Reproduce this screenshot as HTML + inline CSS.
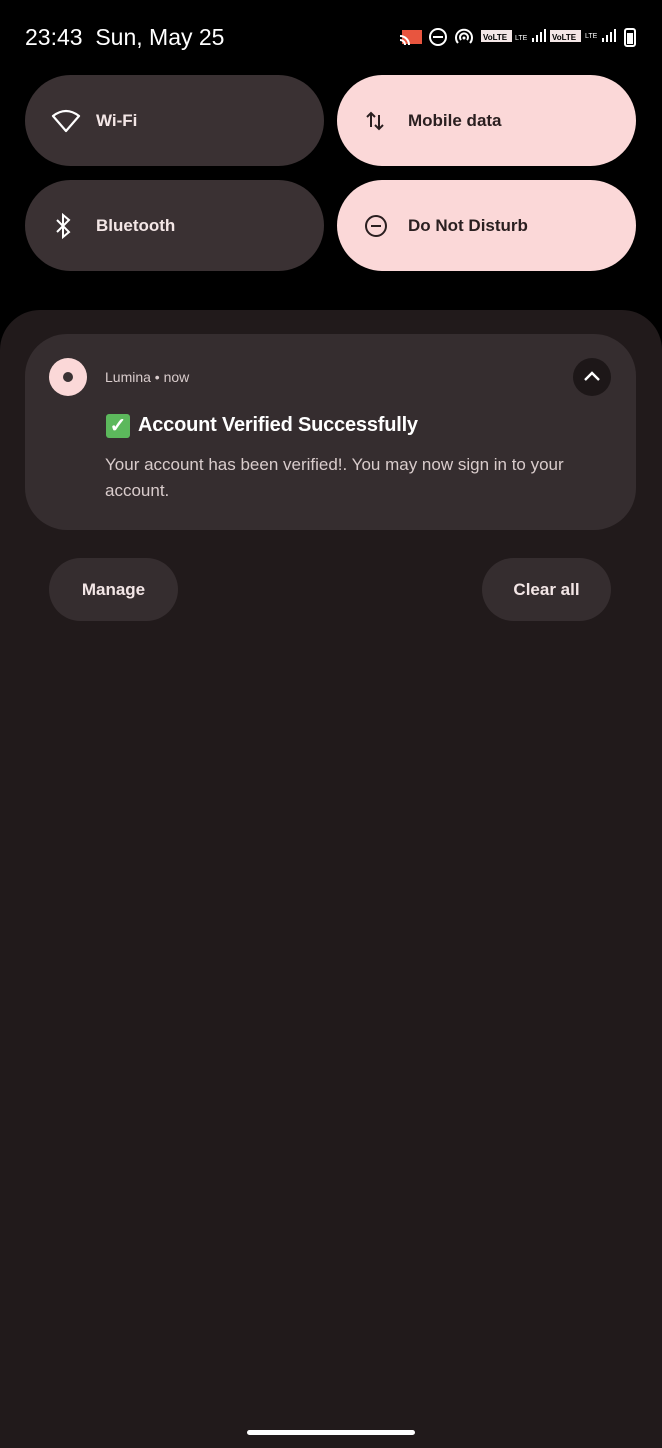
<!DOCTYPE html>
<html style="margin:0;width:662px;height:1448px;overflow:hidden;"><head><style>
body{margin:0;width:662px;height:1448px;background:#000;position:relative;overflow:hidden;font-family:"Liberation Sans",sans-serif;}
.abs{position:absolute;}
.tile{position:absolute;width:299px;height:91px;border-radius:46px;display:flex;align-items:center;font-size:17px;font-weight:bold;}
.dark{background:#3a3133;color:#f3e6e6;}
.pink{background:#fbd8d8;color:#2a1f20;}
.tile svg{position:absolute;left:26px;}
.tile span{position:absolute;left:71px;}
.btn{position:absolute;top:558px;height:63px;border-radius:32px;background:#352d2f;color:#f3e6e6;font-size:17px;font-weight:bold;display:flex;align-items:center;justify-content:center;}
</style></head><body>
<div class="abs" style="left:25px;top:24px;color:#fff;font-size:23px;">23:43&nbsp;&nbsp;Sun, May 25</div>
<svg class="abs" style="left:398px;top:26px" width="245" height="22" viewBox="0 0 245 22">
<rect x="4" y="4" width="20" height="14" fill="#e8553f"/><path d="M2 10a9 9 0 0 1 9 9M2 14a5 5 0 0 1 5 5" stroke="#fff" stroke-width="2" fill="none"/>
<circle cx="40" cy="11" r="8" stroke="#fff" stroke-width="2" fill="none"/><rect x="35" y="10" width="10" height="2" fill="#fff"/>
<path d="M60 17a8 8 0 1 1 12 0M63 14a4 4 0 1 1 6 0" stroke="#fff" stroke-width="2" fill="none"/><circle cx="66" cy="12" r="1.5" fill="#fff"/>
<rect x="83" y="4" width="31" height="12" fill="#f3e6e6"/><text x="85" y="14" font-size="8" font-weight="bold" fill="#000">VoLTE</text>
<text x="117" y="14" font-size="7" fill="#fff">LTE</text>
<path d="M134 16v-4h2v4zM138 16v-7h2v7zM142 16v-10h2v10zM146 16v-13h2v13z" fill="#fff"/>
<rect x="152" y="4" width="31" height="12" fill="#f3e6e6"/><text x="154" y="14" font-size="8" font-weight="bold" fill="#000">VoLTE</text>
<text x="187" y="12" font-size="7" fill="#fff">LTE</text>
<path d="M204 16v-4h2v4zM208 16v-7h2v7zM212 16v-10h2v10zM216 16v-13h2v13z" fill="#fff"/>
<rect x="227" y="3" width="10" height="17" rx="2" stroke="#fff" stroke-width="2" fill="none"/><rect x="229" y="7" width="6" height="11" fill="#fff"/>
</svg>
<div class="tile dark" style="left:25px;top:75px"><svg width="30" height="24" viewBox="0 0 30 24"><path d="M2 7Q15-3 28 7L15 22Z" stroke="#fff" stroke-width="2.2" fill="none" stroke-linejoin="round"/></svg><span>Wi-Fi</span></div>
<div class="tile pink" style="left:337px;top:75px"><svg width="24" height="24" viewBox="0 0 24 24"><path d="M8 18V4M4 8l4-4 4 4M16 6v14M12 16l4 4 4-4" stroke="#2a1f20" stroke-width="2" fill="none"/></svg><span>Mobile data</span></div>
<div class="tile dark" style="left:25px;top:180px"><svg width="24" height="26" viewBox="0 0 24 26"><path d="M6 7l12 12-6 5V2l6 5L6 19" stroke="#fff" stroke-width="2" fill="none"/></svg><span>Bluetooth</span></div>
<div class="tile pink" style="left:337px;top:180px"><svg width="26" height="26" viewBox="0 0 26 26"><circle cx="13" cy="13" r="10" stroke="#2a1f20" stroke-width="2" fill="none"/><rect x="8" y="12" width="10" height="2" fill="#2a1f20"/></svg><span>Do Not Disturb</span></div>
<div class="abs" style="left:0;top:310px;width:662px;height:1138px;background:#211a1b;border-radius:40px 40px 0 0"></div>
<div class="abs" style="left:25px;top:334px;width:611px;height:196px;background:#352d2f;border-radius:42px"></div>
<div class="abs" style="left:49px;top:358px;width:38px;height:38px;border-radius:50%;background:#fbd8d8"></div>
<div class="abs" style="left:63px;top:372px;width:10px;height:10px;border-radius:50%;background:#3a3133"></div>
<div class="abs" style="left:105px;top:369px;font-size:14px;color:#d9cccc">Lumina • now</div>
<div class="abs" style="left:573px;top:358px;width:38px;height:38px;border-radius:50%;background:#1d1718"></div>
<svg class="abs" style="left:582px;top:367px" width="20" height="20" viewBox="0 0 20 20"><path d="M3 13l7-7 7 7" stroke="#fff" stroke-width="2.4" fill="none"/></svg>
<div class="abs" style="left:106px;top:414px;width:24px;height:24px;background:#5cb85c;border-radius:3px;color:#fff;font-size:20px;font-weight:bold;text-align:center;line-height:24px">✓</div>
<div class="abs" style="left:138px;top:414px;font-size:20px;color:#fff;font-weight:bold;letter-spacing:-0.2px">Account Verified Successfully</div>
<div class="abs" style="left:105px;top:452px;width:500px;font-size:17px;line-height:26px;color:#d9cccc">Your account has been verified!. You may now sign in to your account.</div>
<div class="btn" style="left:49px;width:129px">Manage</div>
<div class="btn" style="left:482px;width:129px">Clear all</div>
<div class="abs" style="left:247px;top:1430px;width:168px;height:5px;border-radius:3px;background:#fff"></div>
</body></html>
